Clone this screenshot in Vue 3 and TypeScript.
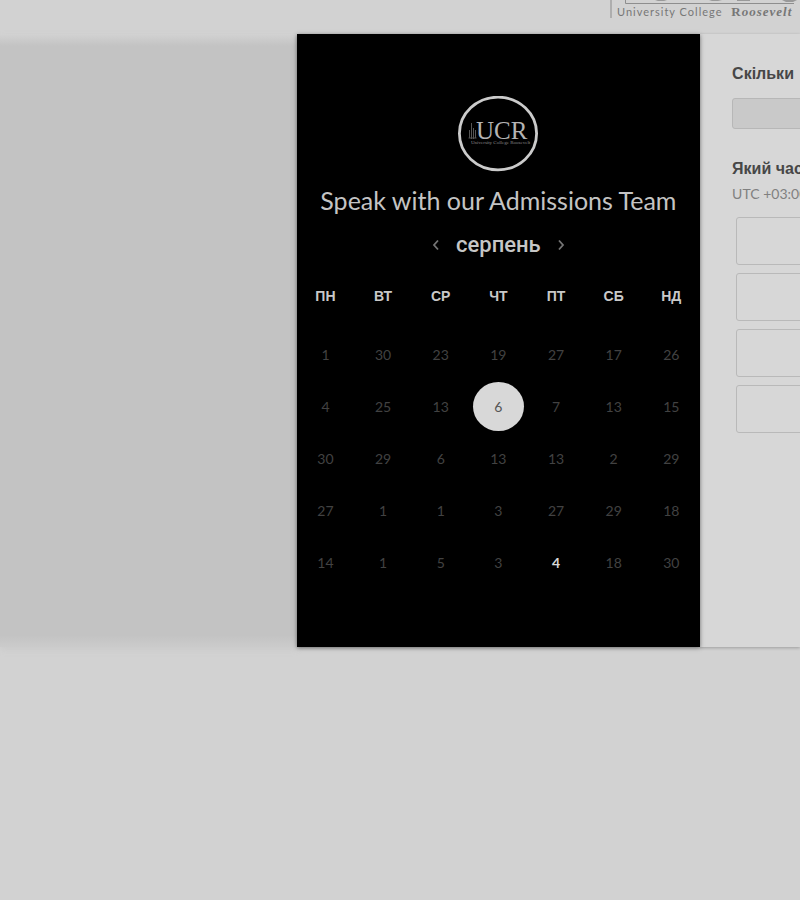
<script setup lang="ts">
interface Day {
  value: number
  state?: 'selected' | 'available'
}

const weekdays: string[] = ['ПН', 'ВТ', 'СР', 'ЧТ', 'ПТ', 'СБ', 'НД']

const weeks: Day[][] = [
  [1, 30, 23, 19, 27, 17, 26],
  [4, 25, 13, 6, 7, 13, 15],
  [30, 29, 6, 13, 13, 2, 29],
  [27, 1, 1, 3, 27, 29, 18],
  [14, 1, 5, 3, 4, 18, 30],
].map((row, r) =>
  row.map((value, c): Day => {
    if (r === 1 && c === 3) return { value, state: 'selected' }
    if (r === 4 && c === 4) return { value, state: 'available' }
    return { value }
  }),
)

const slots: number[] = [1, 2, 3, 4]
</script>

<template>
  <div class="page">
    <header class="top">
      <div class="brand">
        <svg class="brand-mark" viewBox="0 0 190 20" aria-hidden="true">
          <path d="M1 0V18" stroke="#a2a2a2" stroke-width="1.5" />
          <path d="M15.5 0V3.5H184" fill="none" stroke="#8e8e8e" />
          <path d="M45 0H57L54 1H48ZM99 0H112L108 1H102ZM127 0H140V1H127ZM172 0H187L183 2H176Z" fill="#999" />
        </svg>
        <div class="brand-name">University College <b>R<i>oosevelt</i></b></div>
      </div>
    </header>

    <main class="booking">
      <div class="backdrop"></div>

      <section class="calendar">
        <svg class="logo" viewBox="0 0 80 76" role="img" aria-label="UCR">
          <ellipse cx="40" cy="37.5" rx="38.6" ry="36.3" fill="#000" stroke="#cbcbcb" stroke-width="2.8" />
          <path d="M11.5 42V34M13.5 43V30M15.5 43V32M17.5 42V34M10.5 42H18.5M13.5 30V27" fill="none" stroke="#555" />
          <text class="logo-letters" x="18" y="43">UCR</text>
          <text class="logo-caption" x="13" y="48">University College Roosevelt</text>
        </svg>
        <h1>Speak with our Admissions Team</h1>
        <div class="month">
          <button type="button" aria-label="Попередній місяць">
            <svg viewBox="0 0 8 12"><path d="M6 1.5L2 6L6 10.5" /></svg>
          </button>
          <h2>серпень</h2>
          <button type="button" aria-label="Наступний місяць">
            <svg viewBox="0 0 8 12"><path d="M2 1.5L6 6L2 10.5" /></svg>
          </button>
        </div>
        <table>
          <thead>
            <tr><th v-for="name in weekdays" :key="name" scope="col">{{ name }}</th></tr>
          </thead>
          <tbody>
            <tr v-for="(week, w) in weeks" :key="w">
              <td v-for="(day, d) in week" :key="d">
                <button type="button" class="day" :class="day.state" :disabled="!day.state">{{ day.value }}</button>
              </td>
            </tr>
          </tbody>
        </table>
      </section>

      <section class="details">
        <form class="form">
          <label for="duration">Скільки</label>
          <input id="duration" type="text" readonly />
          <h3>Який час</h3>
          <p>UTC +03:00</p>
          <div class="slots">
            <button v-for="slot in slots" :key="slot" type="button"></button>
          </div>
        </form>
      </section>
    </main>
  </div>
</template>

<style>
body {
  background: #d2d2d2;
}
</style>

<style scoped>
.page {
  min-height: 100vh;
  overflow: hidden;
  background: #d2d2d2;
  font-family: Lato, "Liberation Sans", sans-serif;
}

.top {
  display: flex;
  justify-content: flex-end;
  height: 34px;
}

.brand {
  display: grid;
  width: 190px;
  height: 20px;
}

.brand-mark,
.brand-name {
  grid-area: 1 / 1;
}

.brand-mark {
  width: 190px;
  height: 20px;
}

.brand-name {
  padding: 4px 0 0 7px;
  color: #777;
  font-size: 11px;
  line-height: 16px;
  letter-spacing: 1px;
  white-space: nowrap;
}

.brand-name b {
  padding-left: 5px;
  font-family: "Liberation Serif", serif;
  font-size: 13px;
}

.booking {
  display: grid;
  grid-template-columns: minmax(0, 297fr) minmax(0, 404fr) minmax(0, 100fr);
}

.backdrop {
  background: linear-gradient(#d2d2d2, #c3c3c3 12px, #c3c3c3 calc(100% - 12px), #cbcbcb);
  box-shadow: 0 3px 6px #cbcbcb;
}

.calendar {
  z-index: 1;
  display: flex;
  flex-direction: column;
  align-items: center;
  padding: 62px 0 59px;
  background: #000;
  box-shadow: 0 1px 4px rgba(0, 0, 0, 0.5);
}

.logo {
  width: 80px;
  height: 76px;
}

.logo-letters {
  font-family: "Liberation Serif", serif;
  font-size: 25px;
  fill: #b4b4b4;
}

.logo-caption {
  font-family: "Liberation Serif", serif;
  font-size: 5px;
  fill: #888;
}

h1,
h2,
h3,
p {
  margin: 0;
}

h1 {
  margin-top: 12px;
  color: #c4c4c4;
  font-size: 25px;
  font-weight: 400;
  line-height: 32px;
  white-space: nowrap;
}

.month {
  display: flex;
  align-items: center;
  gap: 16px;
  margin-top: 13px;
}

h2 {
  color: #c6c6c6;
  font-family: Roboto, "Liberation Sans", sans-serif;
  font-size: 22px;
  font-weight: 500;
  line-height: 32px;
}

button {
  padding: 0;
  border: 0;
  background: none;
  font: inherit;
}

.month button {
  display: flex;
}

.month svg {
  width: 8px;
  height: 12px;
  fill: none;
  stroke: #757575;
  stroke-width: 1.8;
}

table {
  width: 100%;
  margin-top: 9px;
  border-collapse: collapse;
  table-layout: fixed;
}

th,
td {
  padding: 0;
  text-align: center;
}

th {
  height: 52px;
  padding-bottom: 6px;
  color: #c9c9c9;
  font-family: "Liberation Sans", sans-serif;
  font-size: 14px;
  font-weight: 700;
}

td {
  height: 52px;
}

.day {
  width: 51px;
  height: 49px;
  border-radius: 50%;
  color: #424242;
  font-size: 14px;
}

.day.selected {
  background: #d8d8d8;
  color: #555;
}

.day.available {
  color: #d8d8d8;
  font-weight: 700;
}

.details {
  overflow: hidden;
  background: #d7d7d7;
  box-shadow: 0 1px 3px rgba(0, 0, 0, 0.25);
}

.form {
  width: 320px;
  padding: 30px 32px;
}

label,
h3 {
  display: block;
  color: #474747;
  font-family: "Liberation Sans", sans-serif;
  font-size: 16px;
  font-weight: 700;
  line-height: 20px;
}

input {
  box-sizing: border-box;
  display: block;
  width: 100%;
  height: 31px;
  margin: 14px 0 30px;
  border: 1px solid #b7b7b7;
  border-radius: 3px;
  background: #c9c9c9;
}

p {
  margin-top: 5px;
  color: #808080;
  font-size: 14px;
  line-height: 20px;
}

.slots {
  display: grid;
  gap: 8px;
  margin: 13px 4px 0;
}

.slots button {
  height: 48px;
  border: 1px solid #b9b9b9;
  border-radius: 3px;
}
</style>
